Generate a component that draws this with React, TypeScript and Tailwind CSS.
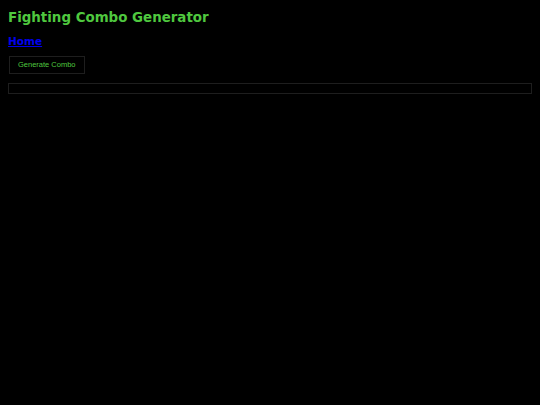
import React from 'react';

const App: React.FC = () => {
  return (
    <div className="min-h-screen bg-black p-2 font-['DejaVu_Sans',sans-serif]">
      <h1 className="pt-px text-[13.4px] font-bold leading-[18px] text-[#4fc83f]">Fighting Combo Generator</h1>
      <nav className="mt-[7px] text-[10.5px] font-bold leading-[14px]">
        <a href="#" className="text-[#0000ee] underline">
          Home
        </a>
      </nav>
      <button className="mt-[8px] ml-px block h-[18px] border border-[#1e1e1e] bg-black px-[8px] font-['Liberation_Sans',sans-serif] text-[7.5px] text-[#4fc83f]">
        Generate Combo
      </button>
      <div className="mt-[9px] h-[11px] w-full border border-[#1e1e1e]" />
    </div>
  );
};

export default App;
